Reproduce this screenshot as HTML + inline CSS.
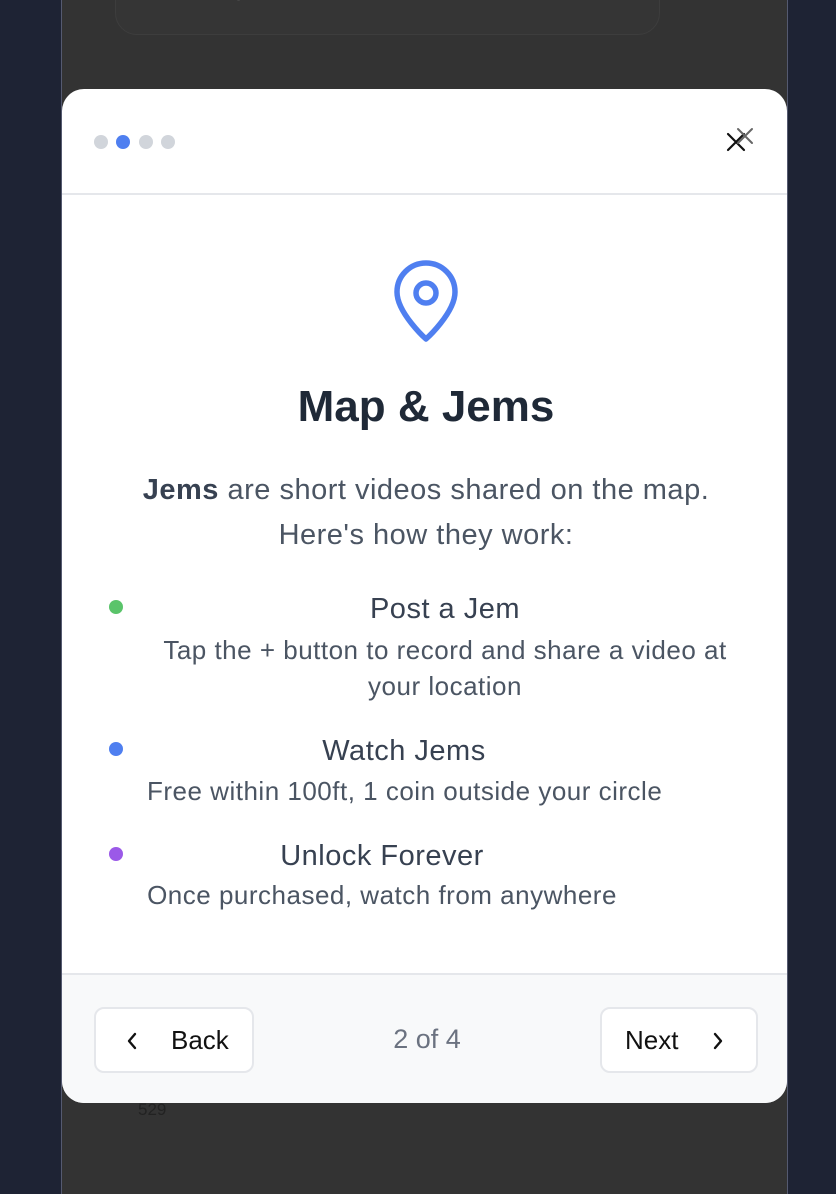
<!DOCTYPE html>
<html><head><meta charset="utf-8"><style>
*{margin:0;padding:0;box-sizing:border-box}
body{width:836px;height:1194px;background:#1e2334;font-family:"Liberation Sans",sans-serif;position:relative;overflow:hidden}
.phone{position:absolute;left:61px;top:0;width:727px;height:1194px;background:#333;border-left:1px solid #555a70;border-right:1px solid #555a70}
.search{position:absolute;left:115px;top:-40px;width:545px;height:75px;border:1px solid #3d3d3d;border-radius:22px;background:#353535;color:#555;font-size:26px;padding:0 30px;line-height:50px}
.modal{position:absolute;left:62px;top:89px;width:725px;height:1014px;background:#fff;border-radius:22px;overflow:hidden}
.hdr{height:106px;border-bottom:2px solid #e5e7eb;position:relative}
.dot{position:absolute;top:135px;width:14px;height:14px;border-radius:50%;background:#d1d5db}
.ftr{position:absolute;left:0;right:0;top:884px;bottom:0;background:#f8f9fa;border-top:2px solid #e5e7eb}
.btn{position:absolute;top:32px;height:66px;background:#fff;border:2px solid #e5e7eb;border-radius:10px;font-size:26px;color:#111;line-height:62px}
.t{position:absolute;text-align:center;white-space:nowrap}
.h{font-size:29px;color:#374151;letter-spacing:0.5px}
.d{font-size:26px;color:#4b5563;line-height:36px;letter-spacing:0.5px}
.b{position:absolute;width:14px;height:14px;border-radius:50%;left:109px}
</style></head><body>
<div class="phone"></div>
<div class="search">Search places and content</div>
<div class="modal">
 <div class="hdr"></div>
 <div class="ftr">
  <div class="btn" style="left:32px;width:160px"><svg style="position:absolute;left:30px;top:23px" width="12" height="18" viewBox="0 0 12 18"><path d="M9 2L3 9l6 7" fill="none" stroke="#111" stroke-width="2.4" stroke-linecap="round" stroke-linejoin="round"/></svg><span style="position:absolute;left:75px">Back</span></div>
  <div style="position:absolute;left:0;right:0;top:33px;text-align:center;font-size:27px;color:#6b7280;line-height:62px;padding-left:5px">2 of 4</div>
  <div class="btn" style="left:538px;width:158px"><span style="position:absolute;left:23px">Next</span><svg style="position:absolute;left:110px;top:23px" width="12" height="18" viewBox="0 0 12 18"><path d="M3 2l6 7-6 7" fill="none" stroke="#111" stroke-width="2.4" stroke-linecap="round" stroke-linejoin="round"/></svg></div>
 </div>
</div>
<div class="dot" style="left:94px"></div>
<div class="dot" style="left:116px;background:#4f7ff0"></div>
<div class="dot" style="left:139px"></div>
<div class="dot" style="left:161px"></div>
<svg style="position:absolute;left:724px;top:126px" width="32" height="30" viewBox="0 0 32 30"><path d="M4 8l16 16M20 8L4 24" stroke="#111" stroke-width="2.2" stroke-linecap="round"/><path d="M14 3l14 14M28 3L14 17" stroke="#666" stroke-width="2" stroke-linecap="round"/></svg>
<svg style="position:absolute;left:390px;top:259px" width="72" height="84" viewBox="0 0 72 84"><path d="M36 80C36 80 7 54 7 33A29 29 0 0 1 65 33C65 54 36 80 36 80Z" fill="none" stroke="#4f7ff0" stroke-width="5.5" stroke-linejoin="round"/><circle cx="36" cy="34" r="10" fill="none" stroke="#4f7ff0" stroke-width="5.5"/></svg>
<div class="t" style="left:0;width:852px;top:382px;font-size:44px;font-weight:bold;color:#1f2937">Map &amp; Jems</div>
<div class="t" style="left:0;width:852px;top:468px;font-size:29px;color:#4b5563;line-height:45px;letter-spacing:0.5px"><b style="color:#374151">Jems</b> are short videos shared on the map.<br>Here's how they work:</div>
<div class="b" style="top:600px;background:#5ac46a"></div>
<div class="t h" style="left:135px;width:620px;top:593px">Post a Jem</div>
<div class="t d" style="left:135px;width:620px;top:632px">Tap the + button to record and share a video at<br>your location</div>
<div class="b" style="top:742px;background:#4f7ff0"></div>
<div class="t h" style="left:147px;width:514px;top:735px">Watch Jems</div>
<div class="t d" style="left:147px;width:514px;top:773px">Free within 100ft, 1 coin outside your circle</div>
<div class="b" style="top:847px;background:#9b59e8"></div>
<div class="t h" style="left:147px;width:470px;top:840px">Unlock Forever</div>
<div class="t d" style="left:147px;width:470px;top:877px">Once purchased, watch from anywhere</div>
<div style="position:absolute;left:138px;top:1100px;font-size:17px;color:#222">529</div>
</body></html>
